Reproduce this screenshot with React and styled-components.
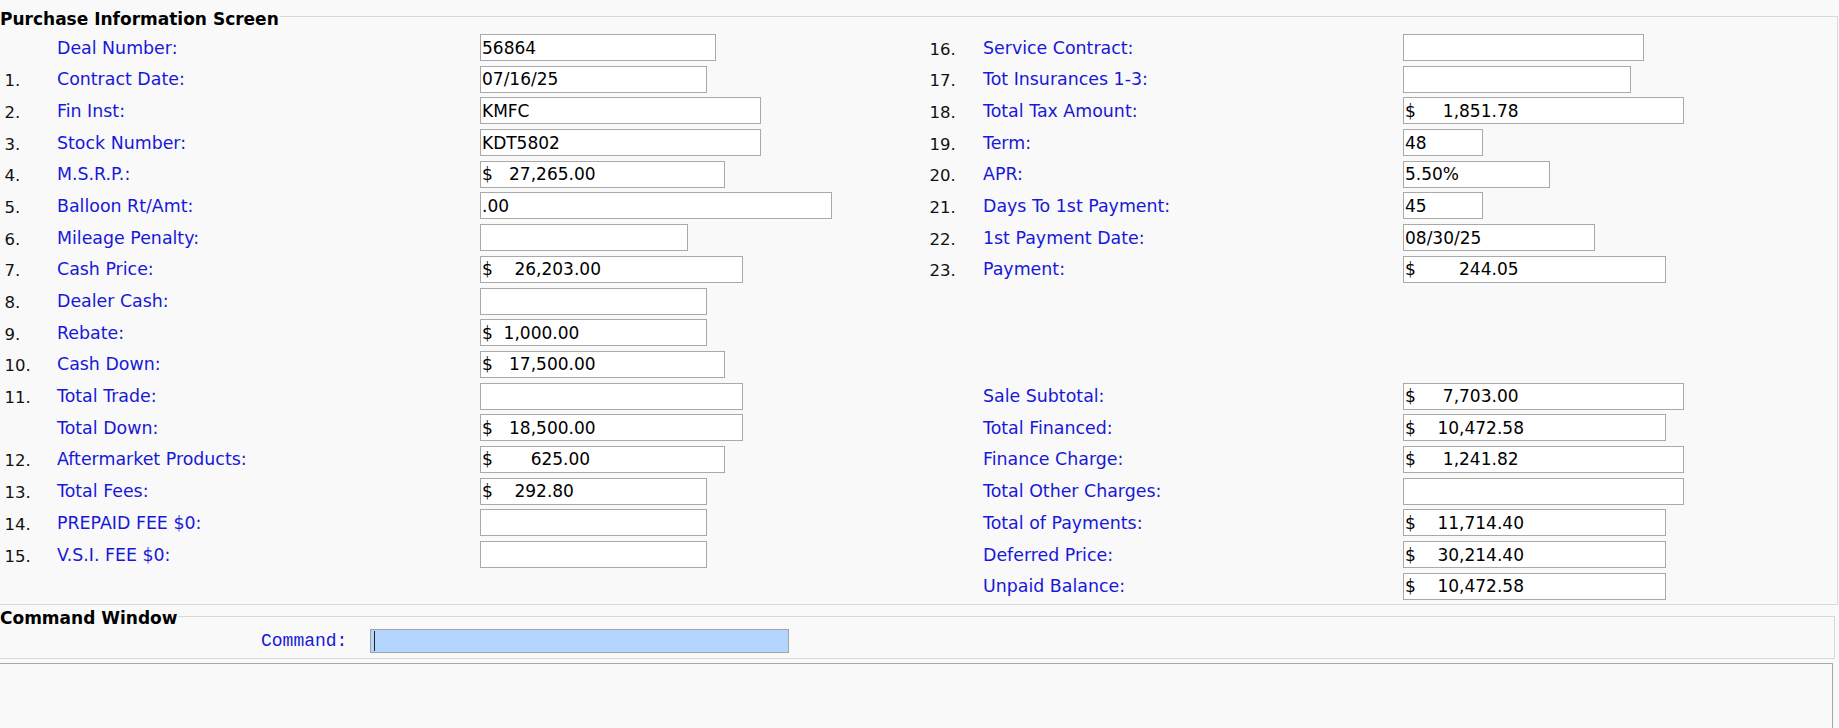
import React from "react";
import styled, { createGlobalStyle } from "styled-components";

const GlobalStyle = createGlobalStyle`
  html, body {
    margin: 0;
    padding: 0;
    overflow: hidden;
    background: #f9f9f9;
  }
  body {
    font-family: "DejaVu Sans", Verdana, sans-serif;
    color: #000;
  }
`;

const Page = styled.div`
  width: 1839px;
  padding-top: 5.5px;
`;

const Panel = styled.fieldset`
  margin: 0 ${(p) => p.$gap}px 0 0;
  padding: 0;
  min-width: 0;
  border: 1px solid #d9d9d9;
  border-left: none;
`;

const Legend = styled.legend`
  padding: 4px 1px 0 0;
  margin-left: 0;
  font-family: "DejaVu Sans", Verdana, sans-serif;
  font-weight: bold;
  font-size: 17px;
  line-height: 18px;
  color: #000;
`;

const FormGrid = styled.div`
  display: grid;
  grid-template-columns: 55px 423px 447px 56px 420px 1fr;
  grid-auto-rows: 31.7px;
  align-items: center;
  padding: 4.2px 0 2px 2px;
`;

const Num = styled.div`
  font-size: 16.5px;
  padding: 3px 0 0 2.5px;
  color: #111;
`;

const Label = styled.div`
  font-size: 17.4px;
  color: #1818d8;
  white-space: nowrap;
`;

const Field = styled.input`
  box-sizing: border-box;
  display: block;
  height: 27px;
  width: ${(p) => p.$w}px;
  margin: 0;
  padding: 0 1px;
  border: 1px solid #a9a9a9;
  border-radius: 0;
  background: #fff;
  font-family: "DejaVu Sans", Verdana, sans-serif;
  font-size: 17px;
  color: #000;
  outline: none;
`;

const Empty = styled.div``;

const CommandRow = styled.div`
  display: grid;
  grid-template-columns: 109px 419px;
  align-items: center;
  padding: 2px 0 5px 261px;
`;

const CommandLabel = styled.div`
  font-family: "Liberation Mono", "Courier New", monospace;
  font-size: 18px;
  color: #1818d8;
`;

const CommandInput = styled.div`
  box-sizing: border-box;
  height: 24px;
  display: flex;
  align-items: center;
  padding-left: 3px;
  border: 1px solid #a3a3a3;
  background: #b4d5fd;
`;

const Caret = styled.span`
  width: 1px;
  height: 20px;
  background: #222;
`;

const Output = styled.div`
  margin: 3.5px 6px 0 0;
  height: 120px;
  border: 1px solid #a9a9a9;
  border-left: none;
  background: #f9f9f9;
`;

const left = [
  ["", "Deal Number:", "56864", 236],
  ["1.", "Contract Date:", "07/16/25", 227],
  ["2.", "Fin Inst:", "KMFC", 281],
  ["3.", "Stock Number:", "KDT5802", 281],
  ["4.", "M.S.R.P.:", "$   27,265.00", 245],
  ["5.", "Balloon Rt/Amt:", ".00", 352],
  ["6.", "Mileage Penalty:", "", 208],
  ["7.", "Cash Price:", "$    26,203.00", 263],
  ["8.", "Dealer Cash:", "", 227],
  ["9.", "Rebate:", "$  1,000.00", 227],
  ["10.", "Cash Down:", "$   17,500.00", 245],
  ["11.", "Total Trade:", "", 263],
  ["", "Total Down:", "$   18,500.00", 263],
  ["12.", "Aftermarket Products:", "$       625.00", 245],
  ["13.", "Total Fees:", "$    292.80", 227],
  ["14.", "PREPAID FEE $0:", "", 227],
  ["15.", "V.S.I. FEE $0:", "", 227],
];

const right = [
  ["16.", "Service Contract:", "", 241],
  ["17.", "Tot Insurances 1-3:", "", 228],
  ["18.", "Total Tax Amount:", "$     1,851.78", 281],
  ["19.", "Term:", "48", 80],
  ["20.", "APR:", "5.50%", 147],
  ["21.", "Days To 1st Payment:", "45", 80],
  ["22.", "1st Payment Date:", "08/30/25", 192],
  ["23.", "Payment:", "$        244.05", 263],
  null,
  null,
  null,
  ["", "Sale Subtotal:", "$     7,703.00", 281],
  ["", "Total Financed:", "$    10,472.58", 263],
  ["", "Finance Charge:", "$     1,241.82", 281],
  ["", "Total Other Charges:", "", 281],
  ["", "Total of Payments:", "$    11,714.40", 263],
  ["", "Deferred Price:", "$    30,214.40", 263],
  ["", "Unpaid Balance:", "$    10,472.58", 263],
];

const Cells = ({ item }) => {
  if (!item) {
    return (
      <>
        <Empty />
        <Empty />
        <Empty />
      </>
    );
  }
  const [num, label, value, w] = item;
  return (
    <>
      <Num>{num}</Num>
      <Label>{label}</Label>
      <div>
        <Field $w={w} value={value} readOnly />
      </div>
    </>
  );
};

const App = () => {
  const rows = Array.from({ length: 18 }, (_, i) => i);
  return (
    <Page>
      <GlobalStyle />
      <Panel $gap={1}>
        <Legend>Purchase Information Screen</Legend>
        <FormGrid>
          {rows.map((i) => (
            <React.Fragment key={i}>
              <Cells item={left[i]} />
              <Cells item={right[i]} />
            </React.Fragment>
          ))}
        </FormGrid>
      </Panel>
      <Panel $gap={4}>
        <Legend>Command Window</Legend>
        <CommandRow>
          <CommandLabel>Command:</CommandLabel>
          <CommandInput>
            <Caret />
          </CommandInput>
        </CommandRow>
      </Panel>
      <Output />
    </Page>
  );
};

export default App;
